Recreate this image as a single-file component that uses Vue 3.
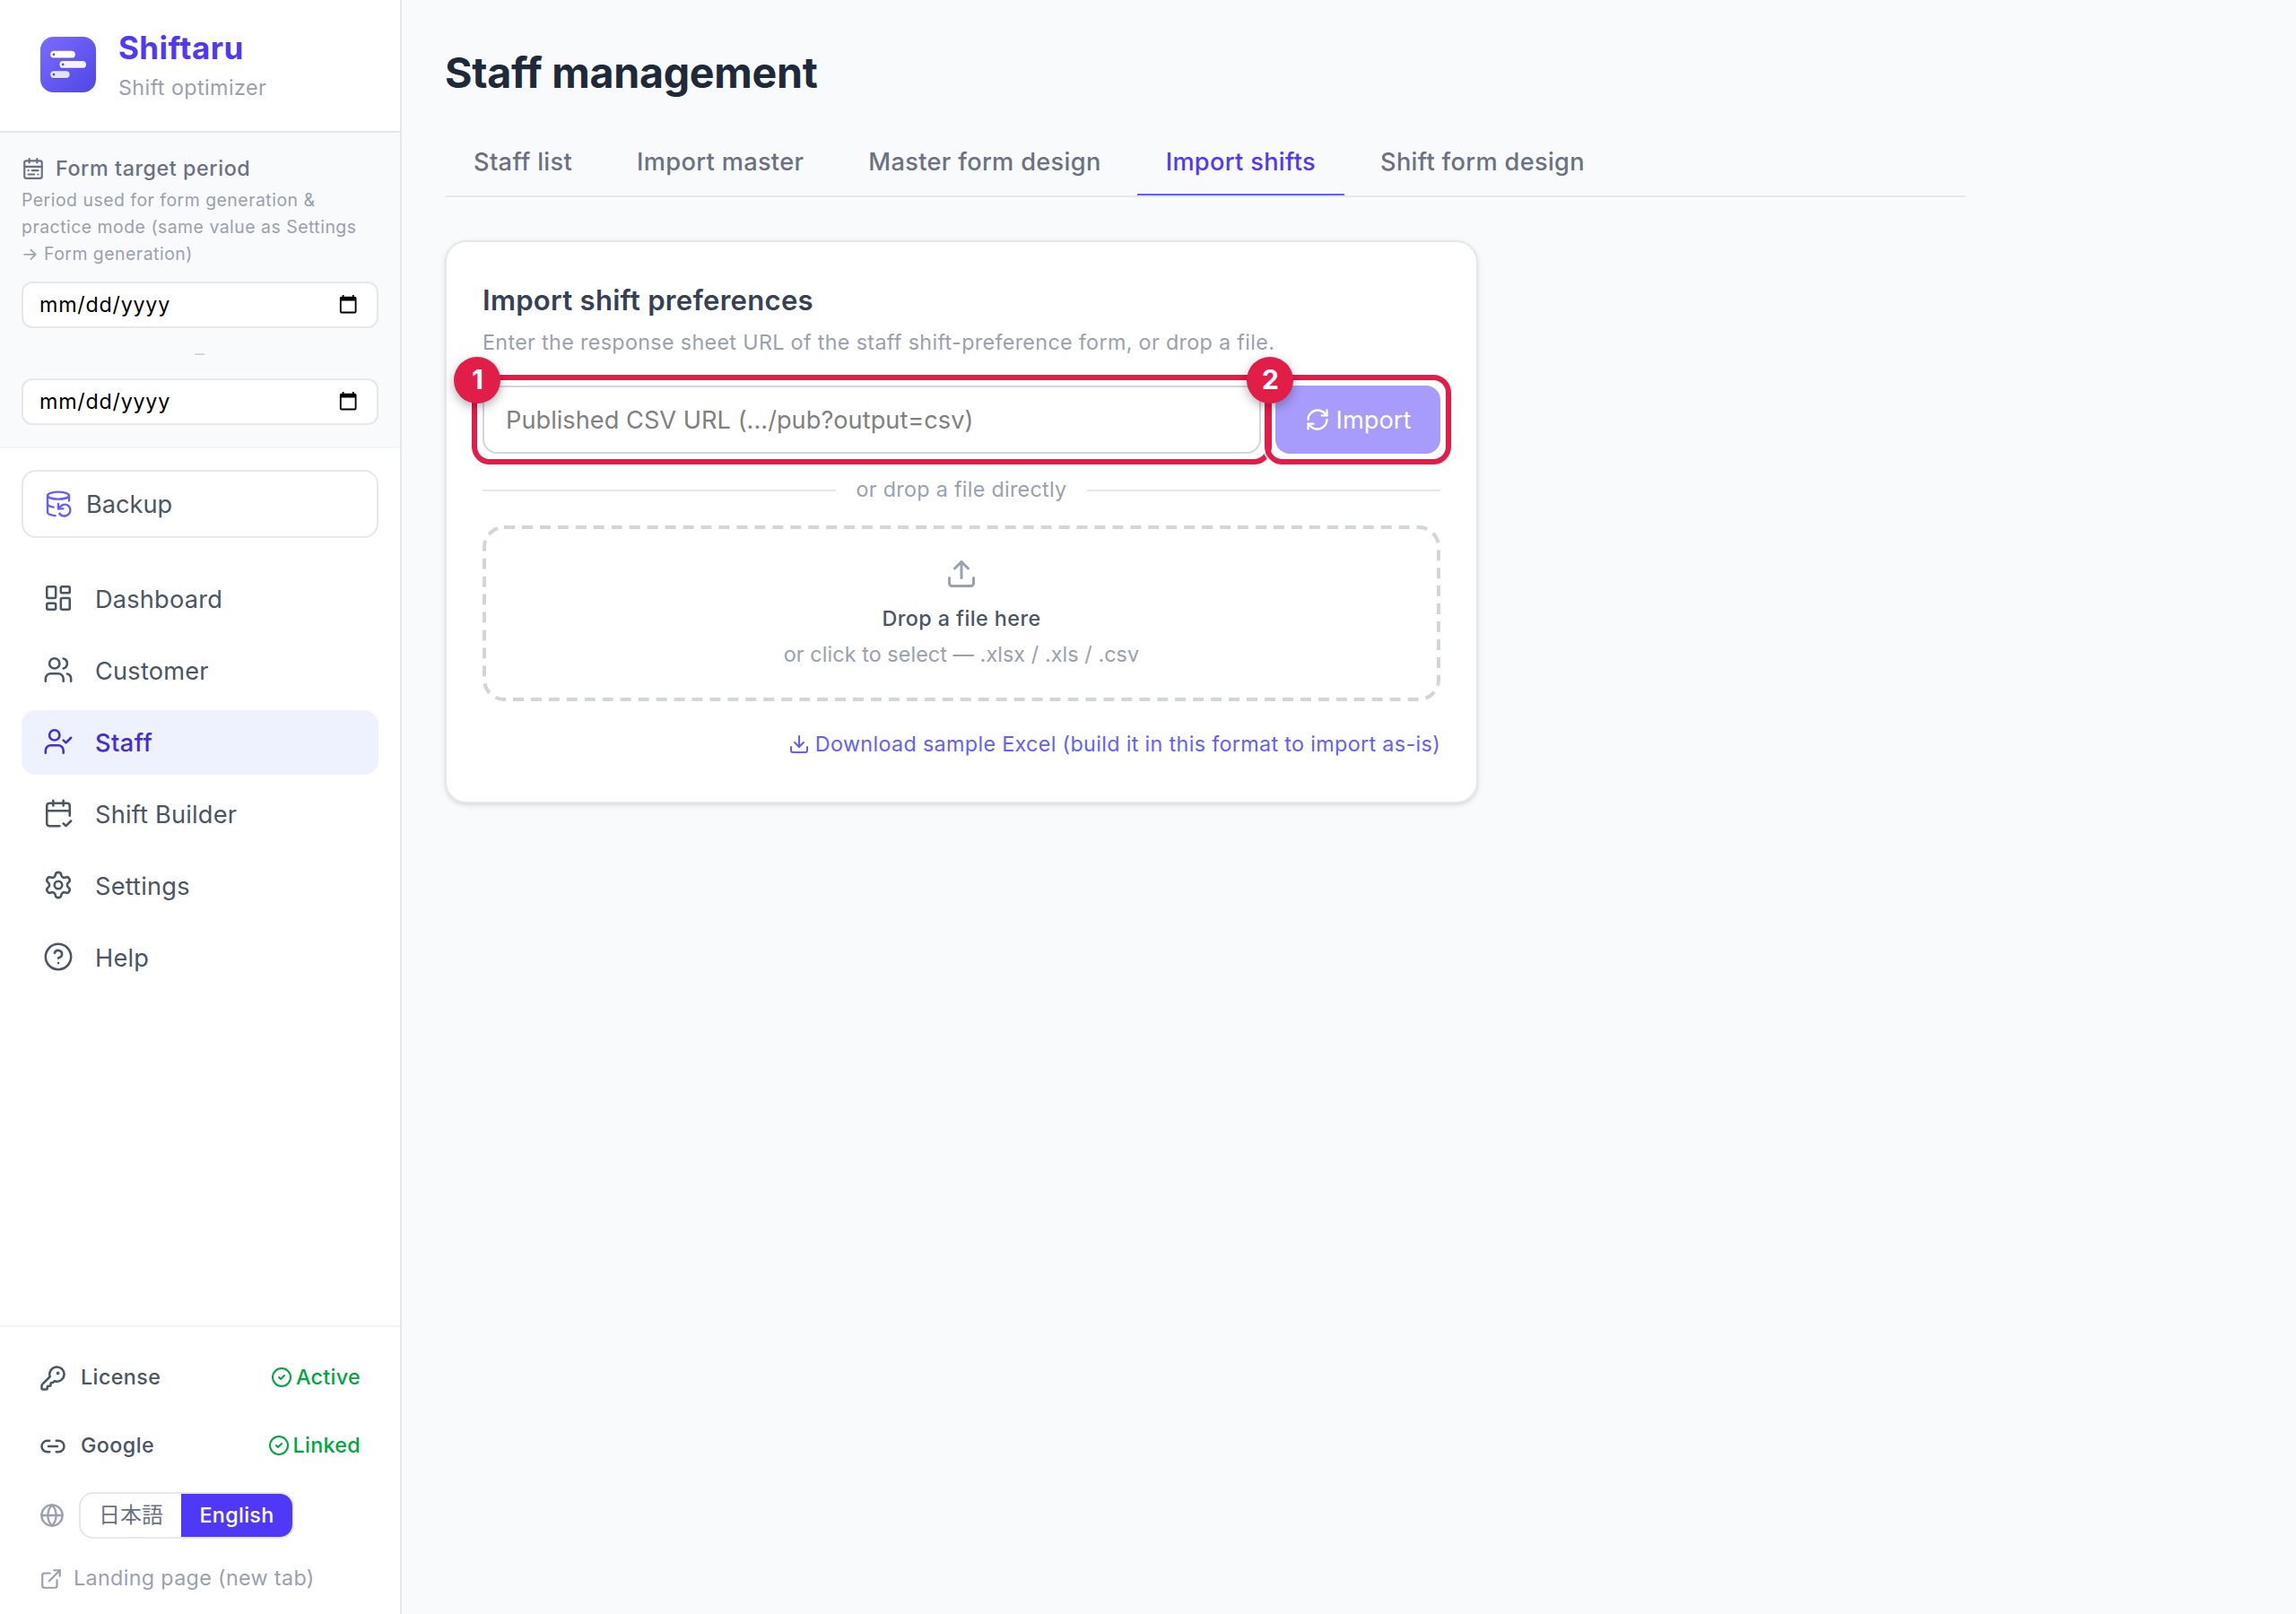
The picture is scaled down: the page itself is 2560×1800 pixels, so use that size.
<script setup>
import { ref } from "vue";

const navItems = [
  {
    name: "Dashboard",
    icon: '<rect width="7" height="9" x="3" y="3" rx="1"/><rect width="7" height="5" x="14" y="3" rx="1"/><rect width="7" height="9" x="14" y="12" rx="1"/><rect width="7" height="5" x="3" y="16" rx="1"/>',
  },
  {
    name: "Customer",
    icon: '<path d="M16 21v-2a4 4 0 0 0-4-4H6a4 4 0 0 0-4 4v2"/><path d="M16 3.128a4 4 0 0 1 0 7.744"/><path d="M22 21v-2a4 4 0 0 0-3-3.87"/><circle cx="9" cy="7" r="4"/>',
  },
  {
    name: "Staff",
    icon: '<path d="m16 11 2 2 4-4"/><path d="M16 21v-2a4 4 0 0 0-4-4H6a4 4 0 0 0-4 4v2"/><circle cx="9" cy="7" r="4"/>',
  },
  {
    name: "Shift Builder",
    icon: '<path d="M8 2v4"/><path d="M16 2v4"/><path d="M21 14V6a2 2 0 0 0-2-2H5a2 2 0 0 0-2 2v14a2 2 0 0 0 2 2h8"/><path d="M3 10h18"/><path d="m16 20 2 2 4-4"/>',
  },
  {
    name: "Settings",
    icon: '<path d="M9.671 4.136a2.34 2.34 0 0 1 4.659 0 2.34 2.34 0 0 0 3.319 1.915 2.34 2.34 0 0 1 2.33 4.033 2.34 2.34 0 0 0 0 3.831 2.34 2.34 0 0 1-2.33 4.033 2.34 2.34 0 0 0-3.319 1.915 2.34 2.34 0 0 1-4.659 0 2.34 2.34 0 0 0-3.32-1.915 2.34 2.34 0 0 1-2.33-4.033 2.34 2.34 0 0 0 0-3.831A2.34 2.34 0 0 1 6.35 6.051a2.34 2.34 0 0 0 3.319-1.915"/><circle cx="12" cy="12" r="3"/>',
  },
  {
    name: "Help",
    icon: '<circle cx="12" cy="12" r="10"/><path d="M9.09 9a3 3 0 0 1 5.83 1c0 2-3 3-3 3"/><path d="M12 17h.01"/>',
  },
];
const activeNav = ref("Staff");

const tabs = [
  "Staff list",
  "Import master",
  "Master form design",
  "Import shifts",
  "Shift form design",
];
const activeTab = ref("Import shifts");

const statuses = [
  {
    name: "License",
    state: "Active",
    icon: '<path d="M2.586 17.414A2 2 0 0 0 2 18.828V21a1 1 0 0 0 1 1h3a1 1 0 0 0 1-1v-1a1 1 0 0 1 1-1h1a1 1 0 0 0 1-1v-1a1 1 0 0 1 1-1h.172a2 2 0 0 0 1.414-.586l.814-.814a6.5 6.5 0 1 0-4-4z"/><circle cx="16.5" cy="7.5" r=".5" fill="currentColor"/>',
  },
  {
    name: "Google",
    state: "Linked",
    icon: '<path d="M9 17H7A5 5 0 0 1 7 7h2"/><path d="M15 7h2a5 5 0 1 1 0 10h-2"/><path d="M8 12h8"/>',
  },
];

const lang = ref("en");
const csvUrl = ref("");
</script>

<template>
  <div class="app">
    <aside class="sidebar">
      <div class="brand">
        <svg class="logo" viewBox="0 0 64 64">
          <defs>
            <linearGradient id="logoBg" x1="0" y1="0" x2="1" y2="1">
              <stop offset="0" stop-color="#7c6cff" />
              <stop offset="1" stop-color="#4f46e5" />
            </linearGradient>
          </defs>
          <rect x="1" y="1" width="62" height="62" rx="14.5" fill="url(#logoBg)" />
          <g fill="#3b2fb0" opacity="0.25">
            <rect x="12.2" y="17.8" width="27.6" height="7.8" rx="3.9" />
            <rect x="22.4" y="29" width="29.6" height="7.8" rx="3.9" />
            <rect x="12.2" y="40.2" width="21.4" height="7.8" rx="3.9" />
          </g>
          <g fill="#fff">
            <rect x="12.2" y="16.8" width="27.6" height="7.8" rx="3.9" />
            <rect x="22.4" y="28" width="29.6" height="7.8" rx="3.9" opacity="0.93" />
            <rect x="12.2" y="39.2" width="21.4" height="7.8" rx="3.9" opacity="0.84" />
          </g>
          <g fill="#4f46e5">
            <circle cx="16" cy="20.8" r="1.3" />
            <circle cx="26.2" cy="31.9" r="1.3" />
            <circle cx="16" cy="43.1" r="1.3" />
          </g>
        </svg>
        <div>
          <p class="brandName">Shiftaru</p>
          <p class="brandSub">Shift optimizer</p>
        </div>
      </div>

      <div class="period">
        <p class="periodLabel">
          <svg class="icon" viewBox="0 0 24 24">
            <rect width="18" height="18" x="3" y="4" rx="2" />
            <path d="M16 2v4M3 10h18M8 2v4M17 14h-6M13 18H7M7 14h.01M17 18h.01" />
          </svg>
          Form target period
        </p>
        <p class="periodNote">
          Period used for form generation &amp;<br />practice mode (same value as
          Settings<br />→ Form generation)
        </p>
        <div class="dateInput">
          <span>mm/dd/yyyy</span>
          <svg viewBox="0 0 24 24">
            <path d="M20 3h-1V1h-2v2H7V1H5v2H4c-1.1 0-2 .9-2 2v16c0 1.1.9 2 2 2h16c1.1 0 2-.9 2-2V5c0-1.1-.9-2-2-2zm0 18H4V8h16v13z" />
          </svg>
        </div>
        <p class="periodDash">–</p>
        <div class="dateInput">
          <span>mm/dd/yyyy</span>
          <svg viewBox="0 0 24 24">
            <path d="M20 3h-1V1h-2v2H7V1H5v2H4c-1.1 0-2 .9-2 2v16c0 1.1.9 2 2 2h16c1.1 0 2-.9 2-2V5c0-1.1-.9-2-2-2zm0 18H4V8h16v13z" />
          </svg>
        </div>
      </div>

      <button class="backupBtn">
        <svg class="icon" viewBox="0 0 24 24">
          <ellipse cx="12" cy="5" rx="9" ry="3" />
          <path d="M3 12a9 3 0 0 0 5 2.69" />
          <path d="M21 9.3V5" />
          <path d="M3 5v14a9 3 0 0 0 6.47 2.88" />
          <path d="M12 12v4h4" />
          <path d="M13 20a5 5 0 0 0 9-3 4.5 4.5 0 0 0-4.5-4.5c-1.33 0-2.54.54-3.41 1.41L12 16" />
        </svg>
        Backup
      </button>

      <nav class="nav">
        <a
          v-for="item in navItems"
          :key="item.name"
          :class="{ navItem: true, active: item.name === activeNav }"
          @click="activeNav = item.name"
        >
          <svg class="icon" viewBox="0 0 24 24" v-html="item.icon"></svg>
          {{ item.name }}
        </a>
      </nav>

      <div class="footer">
        <div v-for="s in statuses" :key="s.name" class="statusRow">
          <svg class="icon" viewBox="0 0 24 24" v-html="s.icon"></svg>
          <span>{{ s.name }}</span>
          <span class="state">
            <svg class="icon" viewBox="0 0 24 24">
              <circle cx="12" cy="12" r="10" />
              <path d="m9 12 2 2 4-4" />
            </svg>
            {{ s.state }}
          </span>
        </div>
        <div class="langRow">
          <svg class="icon" viewBox="0 0 24 24">
            <circle cx="12" cy="12" r="10" />
            <path d="M12 2a14.5 14.5 0 0 0 0 20 14.5 14.5 0 0 0 0-20" />
            <path d="M2 12h20" />
          </svg>
          <div class="langToggle">
            <button :class="{ on: lang === 'ja' }" @click="lang = 'ja'">日本語</button>
            <button :class="{ on: lang === 'en' }" @click="lang = 'en'">English</button>
          </div>
        </div>
        <a class="landing">
          <svg class="icon" viewBox="0 0 24 24">
            <path d="M15 3h6v6" />
            <path d="M10 14 21 3" />
            <path d="M18 13v6a2 2 0 0 1-2 2H5a2 2 0 0 1-2-2V8a2 2 0 0 1 2-2h6" />
          </svg>
          Landing page (new tab)
        </a>
      </div>
    </aside>

    <main class="main">
      <h1>Staff management</h1>
      <div class="tabs">
        <button
          v-for="tab in tabs"
          :key="tab"
          :class="{ tab: true, active: tab === activeTab }"
          @click="activeTab = tab"
        >
          {{ tab }}
        </button>
      </div>

      <section class="card">
        <h2>Import shift preferences</h2>
        <p class="lead">
          Enter the response sheet URL of the staff shift-preference form, or drop a file.
        </p>
        <div class="importRow">
          <div class="step urlStep">
            <input
              v-model="csvUrl"
              type="text"
              class="urlInput"
              placeholder="Published CSV URL (.../pub?output=csv)"
            />
            <span class="ring"></span>
            <span class="badge">1</span>
          </div>
          <div class="step">
            <button class="importBtn">
              <svg class="icon" viewBox="0 0 24 24">
                <path d="M3 12a9 9 0 0 1 9-9 9.75 9.75 0 0 1 6.74 2.74L21 8" />
                <path d="M21 3v5h-5" />
                <path d="M21 12a9 9 0 0 1-9 9 9.75 9.75 0 0 1-6.74-2.74L3 16" />
                <path d="M8 16H3v5" />
              </svg>
              <span>Import</span>
            </button>
            <span class="ring"></span>
            <span class="badge">2</span>
          </div>
        </div>
        <div class="divider"><span>or drop a file directly</span></div>
        <div class="dropzone">
          <svg class="outline" viewBox="0 0 1068 196">
            <rect x="2" y="2" width="1064" height="192" rx="22" />
          </svg>
          <svg class="icon" viewBox="0 0 24 24">
            <path d="M12 3v12" />
            <path d="m17 8-5-5-5 5" />
            <path d="M21 15v4a2 2 0 0 1-2 2H5a2 2 0 0 1-2-2v-4" />
          </svg>
          <p class="dropTitle">Drop a file here</p>
          <p class="dropNote">or click to select — .xlsx / .xls / .csv</p>
        </div>
        <a class="sample">
          <svg class="icon" viewBox="0 0 24 24">
            <path d="M12 15V3" />
            <path d="M21 15v4a2 2 0 0 1-2 2H5a2 2 0 0 1-2-2v-4" />
            <path d="m7 10 5 5 5-5" />
          </svg>
          Download sample Excel (build it in this format to import as-is)
        </a>
      </section>
    </main>
  </div>
</template>

<style>
body {
  background: #f8fafc;
}
</style>

<style scoped>
.app {
  display: flex;
  height: 100vh;
  background: #f8fafc;
  font-family: Inter, "Noto Sans CJK JP", sans-serif;
  font-size: 23.3px;
  line-height: 32px;
  letter-spacing: 0.35px;
  color: #4a5565;
}

.app * {
  box-sizing: border-box;
}

p,
h1,
h2 {
  margin: 0;
}

button {
  font: inherit;
  letter-spacing: inherit;
  color: inherit;
  background: none;
  border: none;
  padding: 0;
}

.icon {
  flex-shrink: 0;
  fill: none;
  stroke: currentColor;
  stroke-width: 2;
  stroke-linecap: round;
  stroke-linejoin: round;
}

.sidebar {
  display: flex;
  flex-direction: column;
  flex-shrink: 0;
  width: 448px;
  background: #fff;
  border-right: 2px solid #e5e7eb;
}

.brand {
  display: flex;
  gap: 24px;
  height: 148px;
  padding: 31px 44px 0;
  border-bottom: 2px solid #e5e7eb;
}

.logo {
  width: 64px;
  height: 64px;
  margin-top: 9px;
}

.brandName {
  font-size: 35px;
  font-weight: 700;
  line-height: 45px;
  letter-spacing: 0.45px;
  color: #4f39f6;
}

.brandSub {
  margin-top: 6px;
  letter-spacing: 0.42px;
  color: #99a1af;
}

.period {
  padding: 24px;
  background: #f8fafc;
  border-bottom: 2px solid #f3f4f6;
}

.periodLabel {
  display: flex;
  align-items: center;
  gap: 12px;
  font-weight: 500;
  letter-spacing: 0.57px;
  color: #6a7282;
}

.periodLabel .icon {
  width: 26px;
  height: 26px;
}

.periodNote {
  margin: 4px 0 16px;
  font-size: 19.4px;
  line-height: 30px;
  letter-spacing: 0.51px;
  white-space: nowrap;
  color: #99a1af;
}

.dateInput {
  display: flex;
  align-items: center;
  justify-content: space-between;
  height: 52px;
  padding: 0 21px 0 18px;
  border: 2px solid #e5e7eb;
  border-radius: 12px;
  background: #fff;
  letter-spacing: 0.75px;
  color: #000;
}

.dateInput svg {
  width: 22.4px;
  height: 22.4px;
  margin-bottom: 2px;
}

.periodDash {
  margin: 12px 0;
  font-size: 22px;
  text-align: center;
  color: #d1d5dc;
}

.backupBtn {
  display: flex;
  align-items: center;
  gap: 15px;
  height: 76px;
  margin: 24px 24px 32px;
  padding: 1px 23px 0;
  border: 2px solid #e5e7eb;
  border-radius: 16px;
  font-size: 27.2px;
  letter-spacing: 0;
}

.backupBtn .icon {
  width: 32px;
  height: 32px;
  margin-bottom: 2px;
  stroke-width: 1.8;
  color: #615fff;
}

.nav {
  display: flex;
  flex-direction: column;
  flex: 1;
  gap: 8px;
  padding: 0 24px;
}

.navItem {
  display: flex;
  align-items: center;
  gap: 24px;
  height: 72px;
  padding: 1px 24px 0;
  border-radius: 16px;
  font-size: 27.2px;
  letter-spacing: 0.2px;
}

.navItem .icon {
  width: 34px;
  height: 34px;
  margin-bottom: 3px;
  stroke-width: 1.8;
}

.navItem.active {
  background: #eef2ff;
  color: #432dd7;
  font-weight: 500;
  letter-spacing: 0.45px;
}

.footer {
  display: flex;
  flex-direction: column;
  padding: 20px 44px 24px;
  border-top: 2px solid #f3f4f6;
}

.statusRow {
  display: flex;
  align-items: center;
  gap: 16px;
  height: 72px;
  font-weight: 500;
  letter-spacing: 0.42px;
}

.statusRow + .statusRow {
  margin-top: 4px;
}

.statusRow > .icon {
  width: 30px;
  height: 30px;
  margin-top: 2px;
}

.state {
  display: flex;
  align-items: center;
  gap: 4px;
  margin-left: auto;
  letter-spacing: 0.3px;
  color: #00a63e;
}

.state .icon {
  width: 24px;
  height: 24px;
}

.langRow {
  display: flex;
  align-items: center;
  gap: 16px;
  margin-top: 16px;
  color: #99a1af;
}

.langRow .icon {
  width: 28px;
  height: 28px;
}

.langToggle {
  display: flex;
  height: 52px;
  border: 2px solid #e5e7eb;
  border-radius: 16px;
  overflow: hidden;
}

.langToggle button {
  padding: 0 20px;
  color: #6a7282;
}

.langToggle button:first-child {
  width: 112px;
  font-size: 24px;
  letter-spacing: 0;
}

.langToggle button.on {
  width: 124px;
  background: #4f39f6;
  color: #fff;
  font-weight: 500;
}

.landing {
  display: flex;
  align-items: center;
  gap: 12px;
  margin-top: 28px;
  color: #99a1af;
}

.landing .icon {
  width: 26px;
  height: 26px;
  margin-top: 2px;
}

.main {
  width: 1792px;
  padding: 49px 48px 0;
}

h1 {
  font-size: 46.6px;
  font-weight: 700;
  line-height: 64px;
  letter-spacing: -0.3px;
  color: #1e2939;
}

.tabs {
  display: flex;
  gap: 8px;
  margin-top: 31px;
  border-bottom: 2px solid #e5e7eb;
}

.tab {
  height: 74px;
  padding: 2px 32px 0;
  border-bottom: 2px solid transparent;
  font-size: 27.2px;
  font-weight: 500;
  letter-spacing: 0.33px;
  white-space: nowrap;
  color: #6a7282;
}

.tab.active {
  border-color: #615fff;
  color: #4f39f6;
}

.card {
  width: 1152px;
  margin-top: 48px;
  padding: 41px 40px 48px;
  border: 2px solid #e5e7eb;
  border-radius: 24px;
  background: #fff;
  box-shadow: 0 2px 6px rgba(0, 0, 0, 0.1), 0 2px 4px -2px rgba(0, 0, 0, 0.1);
}

h2 {
  font-size: 31.1px;
  font-weight: 600;
  line-height: 48px;
  letter-spacing: 0.27px;
  color: #364153;
}

.lead {
  margin-top: 7px;
  letter-spacing: 0.34px;
  white-space: nowrap;
  color: #99a1af;
}

.importRow {
  display: flex;
  gap: 16px;
  margin-top: 32px;
}

.step {
  position: relative;
  height: 76px;
}

.urlStep {
  flex: 1;
}

.urlInput {
  width: 100%;
  height: 100%;
  padding: 0 24px;
  border: 2px solid #d1d5dc;
  border-radius: 16px;
  background: #fff;
  font: inherit;
  font-size: 27.2px;
  letter-spacing: 0.02px;
}

.urlInput::placeholder {
  color: #808080;
}

/* guide marks drawn over the form controls */
.ring {
  position: absolute;
  inset: -12px;
  border: 6px solid #e11d48;
  border-radius: 20px;
  box-shadow: 0 0 0 2px rgba(255, 255, 255, 0.9);
  pointer-events: none;
}

.badge {
  position: absolute;
  top: -32px;
  left: -32px;
  z-index: 1;
  width: 52px;
  height: 52px;
  border-radius: 50%;
  background: #e11d48;
  box-shadow: 0 4px 12px rgba(0, 0, 0, 0.3);
  color: #fff;
  font-size: 30px;
  font-weight: 700;
  line-height: 51px;
  letter-spacing: -1px;
  text-align: center;
}

.importBtn {
  display: flex;
  align-items: center;
  justify-content: center;
  gap: 7px;
  width: 184px;
  height: 76px;
  border-radius: 16px;
  background: #a79bfb;
  color: #fff;
  font-size: 27.2px;
  letter-spacing: 0.05px;
}

.importBtn span {
  padding-top: 2px;
}

.importBtn .icon {
  width: 28px;
  height: 28px;
}

.divider {
  display: flex;
  align-items: center;
  gap: 23px;
  margin-top: 24px;
  letter-spacing: 0.3px;
  color: #99a1af;
}

.divider::before,
.divider::after {
  content: "";
  flex: 1;
  height: 2px;
  margin-top: 2px;
  background: #e5e7eb;
}

.dropzone {
  position: relative;
  display: flex;
  flex-direction: column;
  align-items: center;
  height: 196px;
  margin-top: 24px;
  padding-top: 36px;
}

.outline {
  position: absolute;
  inset: 0;
  width: 100%;
  height: 100%;
  fill: none;
  stroke: #d1d5dc;
  stroke-width: 4;
  stroke-dasharray: 12 7.953;
}

.dropzone .icon {
  width: 36px;
  height: 36px;
  color: #99a1af;
}

.dropTitle {
  margin-top: 16px;
  font-weight: 500;
  letter-spacing: 0.45px;
}

.dropNote {
  margin-top: 8px;
  letter-spacing: 0.09px;
  color: #99a1af;
}

.sample {
  display: flex;
  align-items: center;
  justify-content: flex-end;
  gap: 6px;
  margin-top: 32px;
  white-space: nowrap;
  color: #615fff;
}

.sample .icon {
  width: 24px;
  height: 24px;
}
</style>
